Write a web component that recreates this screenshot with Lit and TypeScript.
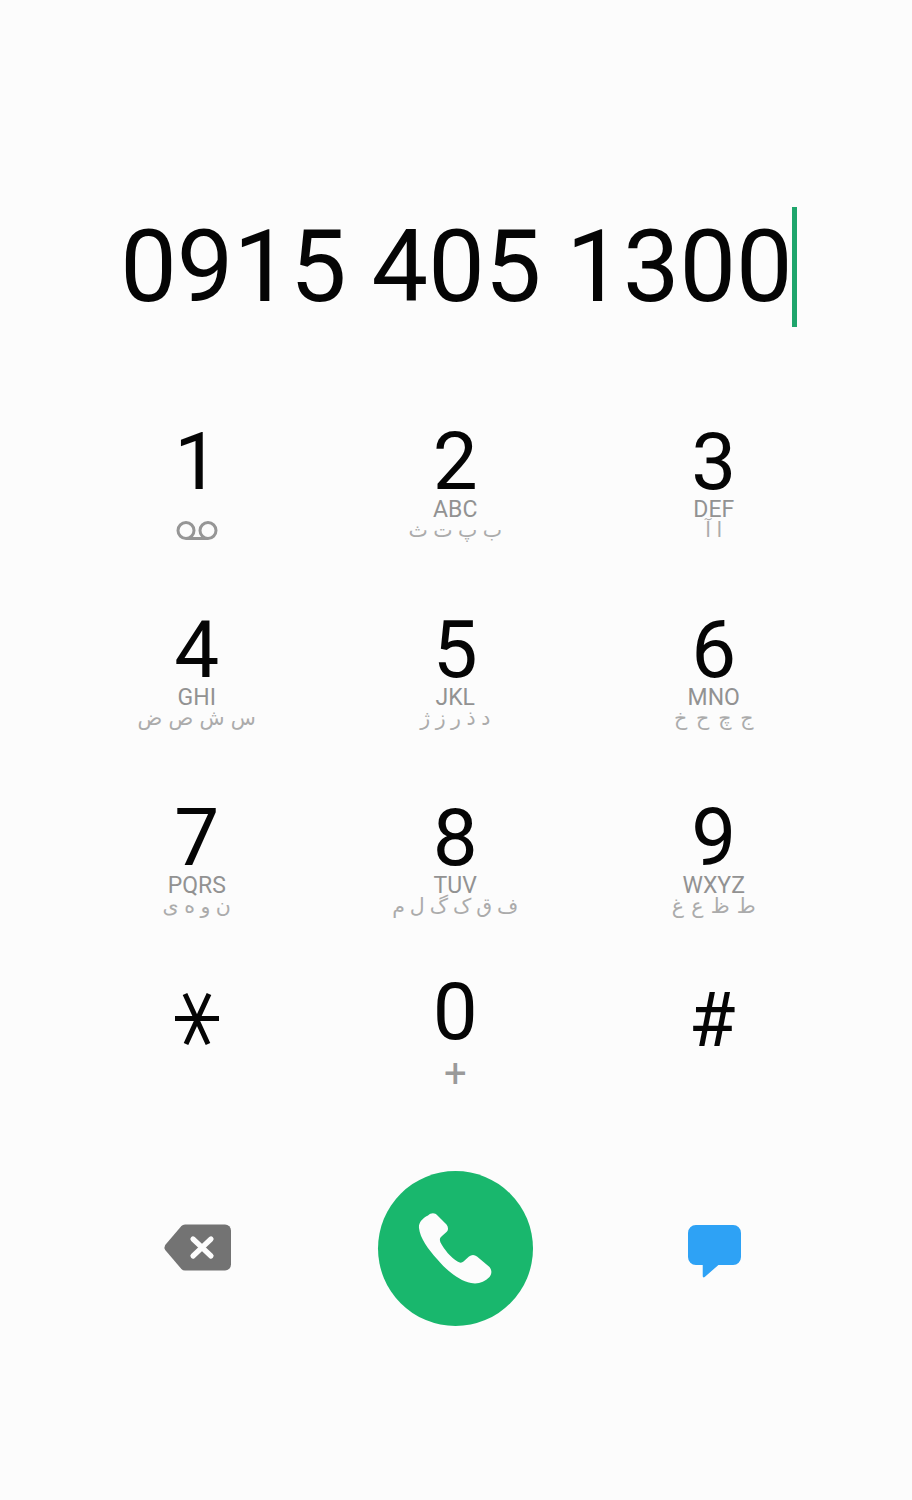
import { LitElement, html, css, svg } from "lit";
import { customElement } from "lit/decorators.js";
import { styleMap } from "lit/directives/style-map.js";

const KEYS: { d: string; icon?: string; l?: string; a?: string; ws?: number }[] = [
  { d: "1", icon: "vm" },
  { d: "2", l: "ABC", a: "ب پ ت ث", ws: -1 },
  { d: "3", l: "DEF", a: "ا آ", ws: -1 },
  { d: "4", l: "GHI", a: "س ش ص ض", ws: -0.3 },
  { d: "5", l: "JKL", a: "د ذ ر ز ژ", ws: -1 },
  { d: "6", l: "MNO", a: "ج چ ح خ", ws: 2.3 },
  { d: "7", l: "PQRS", a: "ن و ه ی", ws: -1 },
  { d: "8", l: "TUV", a: "ف ق ک گ ل م", ws: -1.6 },
  { d: "9", l: "WXYZ", a: "ط ظ ع غ", ws: 0.7 },
];

@customElement("app-root")
export class AppRoot extends LitElement {
  static styles = css`
    :host { display: block; height: 1500px; background: #fcfcfc; font-family: Roboto, sans-serif; overflow: hidden; }
    .display { display: flex; justify-content: center; align-items: center; padding-top: 207px; height: 120px; color: #050505; padding-left: 5.5px; }
    .number { font-size: 100.7px; line-height: 120px; white-space: pre; }
    .caret { width: 5px; height: 120px; background: #1fa56c; margin-left: -0.5px; }
    .pad { display: grid; grid-template-columns: repeat(3, 258.5px); grid-template-rows: 188px 188px 174px 175px; padding: 95px 0 0 67.5px; }
    .key { display: flex; flex-direction: column; align-items: center; }
    .digit { font-size: 80px; line-height: 80px; color: #050505; }
    .letters { font-size: 23px; line-height: 22px; margin-top: -3px; color: #929292; }
    .arabic { font-family: "DejaVu Sans", sans-serif; font-size: 20.5px; line-height: 22px; margin-top: -2px; color: #ababab; direction: rtl; white-space: nowrap; }
    .vm { width: 42px; height: 20px; margin-top: 19px; display: block; }
    .symbol { width: 46px; height: 56px; margin-top: 19px; display: block; }
    .hash { font-size: 76px; line-height: 80px; color: #050505; margin-top: 8px; margin-right: 3px; }
    .plus { font-size: 40px; line-height: 36px; color: #9a9a9a; margin-top: 4px; }
    .actions { display: grid; grid-template-columns: repeat(3, 258.5px); padding: 23.5px 0 0 67.5px; align-items: center; height: 154px; justify-items: center; }
    .call { width: 155px; height: 155px; border-radius: 50%; background: #19b76d; display: flex; align-items: center; justify-content: center; }
    .call svg { width: 96px; height: 96px; display: block; }
    .back { width: 70px; height: 50px; display: block; margin-left: 2px; }
    .msg { width: 53px; height: 54px; display: block; margin-top: 8px; margin-left: 1px; }
  `;

  private key(k: (typeof KEYS)[number]) {
    return html`<div class="key">
      <div class="digit">${k.d}</div>
      ${k.icon
        ? html`<svg class="vm" viewBox="0 0 42 20" fill="none" stroke="#969696" stroke-width="3">
            <circle cx="10" cy="9.500" r="8"></circle>
            <circle cx="32" cy="9.500" r="8"></circle>
            <path d="M10 17.500h22"></path>
          </svg>`
        : html`<div class="letters">${k.l}</div>
            <div class="arabic" style=${styleMap({ wordSpacing: `${k.ws}px` })}>${k.a}</div>`}
    </div>`;
  }

  render() {
    return html`
      <div class="display">
        <div class="number">0915 405 1300</div>
        <div class="caret"></div>
      </div>
      <div class="pad">
        ${KEYS.map((k) => this.key(k))}
        <div class="key">
          <svg class="symbol" viewBox="0 0 46 56" fill="none" stroke="#050505" stroke-width="5">
            ${svg`<path d="M1 27.500h44M11 3l23 50M35 3L12 53"></path>`}
          </svg>
        </div>
        <div class="key">
          <div class="digit">0</div>
          <div class="plus">+</div>
        </div>
        <div class="key"><div class="hash">#</div></div>
      </div>
      <div class="actions">
        <svg class="back" viewBox="0 0 70 50">
          <path d="M22 1.500H62a6 6 0 0 1 6 6v34a6 6 0 0 1-6 6H22a5 5 0 0 1-3.600-1.600L2.200 27a5 5 0 0 1 0-5L18.400 3.100A5 5 0 0 1 22 1.500z" fill="#737373"></path>
          <path d="M30 16l18 17M48 16L30 33" stroke="#fcfcfc" stroke-width="5.200" stroke-linecap="round"></path>
        </svg>
        <div class="call">
          <svg viewBox="0 0 96 96">
            <path d="M21 15.500C24 12.500 28 12.500 30.500 15.500L39.500 24.500C41.500 27 41.500 30 39.500 32L35 36C32.500 38 32.500 40 33.500 42.500C37.500 50 43.500 57 50.500 61.500C52.500 63 55 63 56.500 61.500L62 56.500C64.500 54.500 67.500 54.500 70 56.500L82.500 67C85 70 85 74 82.500 77C77.500 82 71 84.500 64 83C52 80.500 40 71 30 59C21 49 13 38 12 28C11.500 23 15 18.500 21 15.500Z" fill="#fcfcfc"></path>
          </svg>
        </div>
        <svg class="msg" viewBox="0 0 54 54" preserveAspectRatio="none">
          <path d="M8 0h38a8 8 0 0 1 8 8v24a8 8 0 0 1-8 8H31L17 52c-1 .8-2 .3-2-1V40H8a8 8 0 0 1-8-8V8a8 8 0 0 1 8-8z" fill="#2ea2f5"></path>
        </svg>
      </div>
    `;
  }
}
